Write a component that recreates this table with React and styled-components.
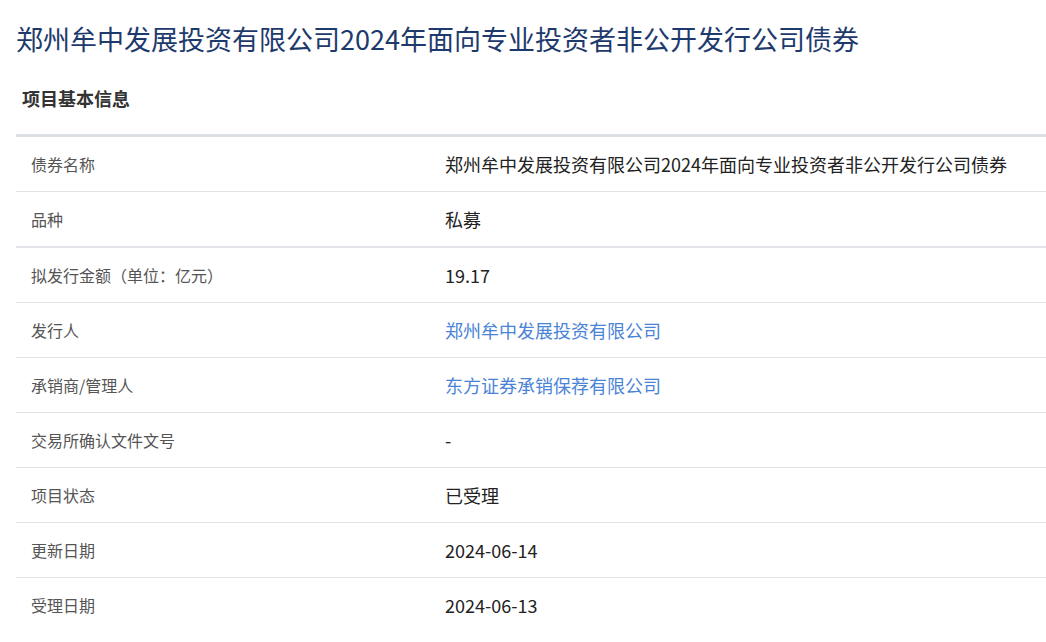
import React from 'react';
import styled, { createGlobalStyle } from 'styled-components';

const GlobalStyle = createGlobalStyle`
  body {
    margin: 0;
    background: #fff;
    font-family: "Noto Sans CJK SC", "Noto Sans", sans-serif;
  }
`

const Page = styled.div`
  padding: 18px 0 0 16px;
`

const Title = styled.h1`
  margin: 0;
  font-size: 27px;
  line-height: 41px;
  font-weight: 400;
  color: #1e3a6c;
  white-space: nowrap;
`

const SectionTitle = styled.h2`
  margin: 27px 0 0 6px;
  font-size: 18px;
  line-height: 24px;
  font-weight: 700;
  color: #333;
`

const Table = styled.div`
  margin-top: 24px;
  border-top: 3px solid #dcdfe4;
`

const Row = styled.div`
  display: grid;
  grid-template-columns: 414px 1fr;
  align-items: center;
  height: 54px;
  border-bottom: ${p => p.$thick ? '2px' : '1px'} solid #e1e3e8;
  &:last-child {
    border-bottom: none;
  }
`

const Label = styled.div`
  padding-left: 15px;
  font-size: 16px;
  color: #555;
`

const Value = styled.div`
  padding-left: 15px;
  font-size: 18px;
  color: ${p => p.$link ? '#4a84d6' : '#222'};
  white-space: nowrap;
`

const rows = [
  { label: '债券名称', value: '郑州牟中发展投资有限公司2024年面向专业投资者非公开发行公司债券' },
  { label: '品种', value: '私募', thick: true },
  { label: '拟发行金额（单位：亿元）', value: '19.17' },
  { label: '发行人', value: '郑州牟中发展投资有限公司', link: true },
  { label: '承销商/管理人', value: '东方证券承销保荐有限公司', link: true },
  { label: '交易所确认文件文号', value: '-' },
  { label: '项目状态', value: '已受理' },
  { label: '更新日期', value: '2024-06-14' },
  { label: '受理日期', value: '2024-06-13' },
]

export default function App() {
  return (
    <Page>
      <GlobalStyle />
      <Title>郑州牟中发展投资有限公司2024年面向专业投资者非公开发行公司债券</Title>
      <SectionTitle>项目基本信息</SectionTitle>
      <Table>
        {rows.map(r => (
          <Row key={r.label} $thick={r.thick}>
            <Label>{r.label}</Label>
            <Value $link={r.link}>{r.value}</Value>
          </Row>
        ))}
      </Table>
    </Page>
  )
}
